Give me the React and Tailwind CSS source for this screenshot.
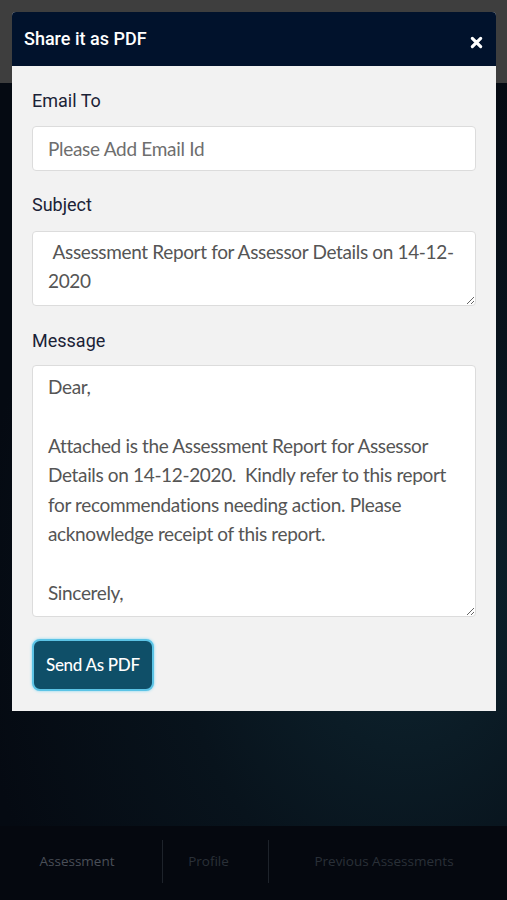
import React from "react";

export default function App() {
  const msg =
    "Dear,\n\nAttached is the Assessment Report for Assessor Details on 14-12-2020.  Kindly refer to this report for recommendations needing action. Please acknowledge receipt of this report.\n\nSincerely,";
  return (
    <div className="relative w-[507px] h-[900px] overflow-hidden bg-[#060a12]" style={{ fontFamily: "Roboto, 'Liberation Sans', sans-serif" }}>
      {/* background page */}
      <div className="flex flex-col h-full">
        <div className="h-[83px] bg-[#3e3e3e]" />
        <div className="flex-1 bg-[radial-gradient(ellipse_at_80%_70%,#0e2530_0%,#08131c_40%,#050a12_75%)]" />
        <div className="h-[74px] bg-[#05080f] flex items-center pb-[4px]" style={{ fontFamily: "'Open Sans', sans-serif" }}>
          <div className="w-[162px] pr-[8px] text-center text-[13.5px] text-[#4a4f58]">Assessment</div>
          <div className="w-px h-[43px] bg-[#1e232b]" />
          <div className="w-[105px] pr-[14px] text-center text-[13.5px] text-[#2a3038]">Profile</div>
          <div className="w-px h-[43px] bg-[#1e232b]" />
          <div className="flex-1 pr-[8px] text-center text-[13.5px] text-[#2a3038]">Previous Assessments</div>
        </div>
      </div>

      {/* modal */}
      <div className="absolute left-[12px] top-[12px] w-[484px] rounded-t-[4px] overflow-hidden bg-[#f2f2f2]">
        <div className="h-[54px] bg-[#01122c] flex items-center justify-between pl-[12px] pr-[12px]">
          <div className="text-white text-[18px] font-medium pb-[1px]">Share it as PDF</div>
          <svg width="13" height="13" viewBox="0 0 14 14" className="mt-[6px] mr-[1px]">
            <path d="M2.5 2.5 L11.5 11.5 M11.5 2.5 L2.5 11.5" stroke="white" strokeWidth="3.4" strokeLinecap="round" />
          </svg>
        </div>
        <div className="px-[20px] pt-[23px] pb-[20px] flex flex-col">
          <label className="text-[18px] text-[#1b2236] leading-[24px]">Email To</label>
          <input
            className="mt-[13px] h-[45px] w-full bg-white border border-[#dcdcdc] rounded-[4px] px-[15px] text-[19px] tracking-[-0.3px] text-[#555] placeholder:text-[#6e6e6e] outline-none"
            style={{ fontFamily: "Lato, 'Open Sans', sans-serif" }}
            placeholder="Please Add Email Id"
          />
          <label className="mt-[22px] text-[18px] text-[#1b2236] leading-[24px]">Subject</label>
          <textarea
            className="mt-[14px] h-[75px] w-full bg-white border border-[#dcdcdc] rounded-[4px] px-[15px] py-[5px] text-[19px] tracking-[-0.35px] leading-[29px] text-[#555] outline-none"
            style={{ fontFamily: "Lato, 'Open Sans', sans-serif" }}
            defaultValue=" Assessment Report for Assessor Details on 14-12-2020"
          />
          <label className="mt-[23px] text-[18px] text-[#1b2236] leading-[24px]">Message</label>
          <textarea
            className="mt-[12px] h-[252px] w-full bg-white border border-[#dcdcdc] rounded-[4px] px-[15px] py-[6px] text-[19px] tracking-[-0.35px] leading-[29.4px] text-[#555] outline-none"
            style={{ fontFamily: "Lato, 'Open Sans', sans-serif" }}
            defaultValue={msg}
          />
          <div className="mt-[22px]">
            <button
              className="h-[52px] px-[12px] rounded-[8px] bg-[#0f4f68] border-2 border-[#5cc4e6] text-white text-[17px] font-medium tracking-[-0.3px] shadow-[0_0_3px_#7fd6f2]"
              style={{ fontFamily: "Lato, 'Open Sans', sans-serif" }}
            >
              Send As PDF
            </button>
          </div>
        </div>
      </div>
    </div>
  );
}
